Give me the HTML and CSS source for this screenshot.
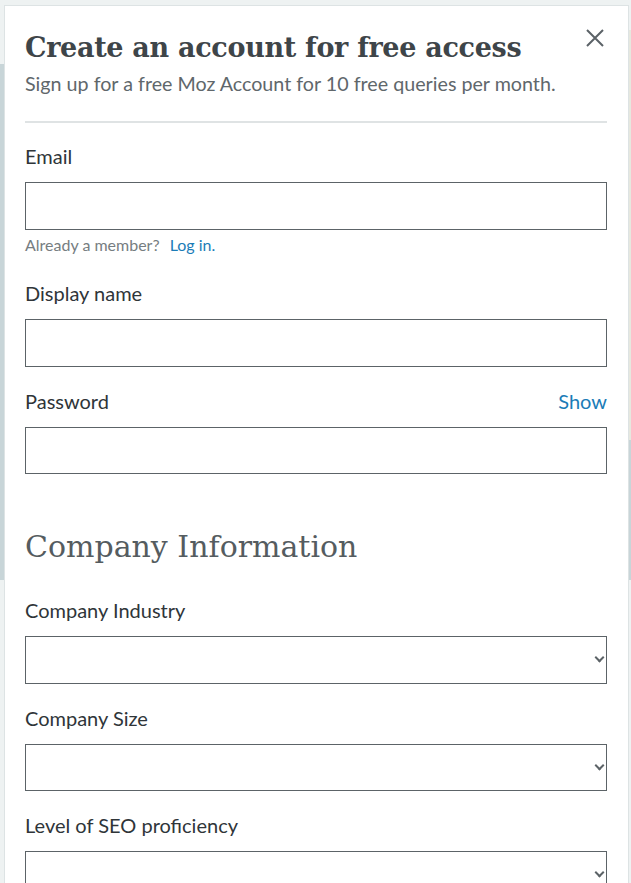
FILE: index.html
```html
<!DOCTYPE html>
<html lang="en">
<head>
<meta charset="utf-8">
<title>Create an account</title>
<link rel="stylesheet" href="styles.css">
</head>
<body>
<div class="page">
  <div class="modal">
    <div class="head">
      <h1 class="title">Create an account for free access</h1>
      <button class="close" aria-label="Close">
        <svg width="20" height="20" viewBox="0 0 20 20"><path d="M2 2 L18 18 M18 2 L2 18" stroke="#5b6267" stroke-width="2" fill="none"/></svg>
      </button>
    </div>
    <p class="subtitle">Sign up for a free Moz Account for 10 free queries per month.</p>
    <hr class="divider">
    <form class="form">
      <div class="field">
        <label class="label">Email</label>
        <input class="input" type="text">
        <div class="help">Already a member? <a class="link small" href="#">Log in.</a></div>
      </div>
      <div class="field">
        <label class="label">Display name</label>
        <input class="input" type="text">
      </div>
      <div class="field">
        <div class="label-row">
          <label class="label">Password</label>
          <a class="link" href="#">Show</a>
        </div>
        <input class="input" type="password">
      </div>
      <h2 class="section">Company Information</h2>
      <div class="field">
        <label class="label">Company Industry</label>
        <div class="select"><span class="chev"></span></div>
      </div>
      <div class="field">
        <label class="label">Company Size</label>
        <div class="select"><span class="chev"></span></div>
      </div>
      <div class="field">
        <label class="label">Level of SEO proficiency</label>
        <div class="select"><span class="chev"></span></div>
      </div>
    </form>
  </div>
</div>
</body>
</html>
```
FILE: styles.css
```css
* { box-sizing: border-box; }
html, body { margin: 0; padding: 0; }
body {
  width: 631px;
  height: 883px;
  overflow: hidden;
  background: #eef2f2;
  font-family: "Lato", "Noto Sans", sans-serif;
}
.page {
  height: 883px;
  padding: 5px 2px 0 4px;
  background:
    linear-gradient(to bottom, transparent 0, transparent 64px, #c8d5d8 64px, #c8d5d8 580px, transparent 580px) left top / 4px 100% no-repeat,
    linear-gradient(to bottom, transparent 0, transparent 30px, #e6e8df 30px, #e6e8df 440px, #c8d5d8 440px, #c8d5d8 580px, transparent 580px) right top / 2px 100% no-repeat,
    #eef2f2;
}
.modal {
  background: #fff;
  border: 1px solid #dde3e4;
  border-bottom: none;
  height: 900px;
  padding: 22px 21px 0 20px;
}
.head {
  display: flex;
  justify-content: space-between;
  align-items: flex-start;
}
.title {
  margin: 0;
  font-family: "DejaVu Serif", serif;
  font-weight: bold;
  font-size: 27px;
  line-height: 40px;
  color: #3e4549;
  letter-spacing: -0.3px;
}
.close {
  border: 0;
  background: none;
  padding: 0;
  margin: 0 2px 0 0;
  width: 20px;
  height: 20px;
  cursor: pointer;
}
.close svg { display: block; }
.subtitle {
  margin: 2px 0 0;
  font-size: 19.7px;
  line-height: 28px;
  color: #60676b;
}
.divider {
  border: 0;
  border-top: 2px solid #dfe3e4;
  margin: 23px 0 18px;
}
.form { display: flex; flex-direction: column; }
.field { margin-bottom: 19px; }
.label {
  display: block;
  font-size: 20px;
  line-height: 30px;
  color: #2f3539;
  margin-bottom: 11px;
}
.label-row {
  display: flex;
  justify-content: space-between;
  align-items: baseline;
}
.label-row .label { margin-bottom: 11px; }
.link {
  color: #1b7cb7;
  text-decoration: none;
  font-size: 20px;
  line-height: 30px;
}
.link.small { font-size: 16px; line-height: 20px; margin-left: 6px; }
.input, .select {
  display: block;
  width: 100%;
  height: 47.5px;
  border: 1px solid #5c6367;
  border-radius: 0;
  background: #fff;
  margin: 0;
  font: inherit;
}
.select { position: relative; }
.chev {
  position: absolute;
  right: 3px;
  top: 17px;
  width: 7px;
  height: 7px;
  border-right: 2px solid #5c6367;
  border-bottom: 2px solid #5c6367;
  transform: rotate(45deg);
}
.help {
  font-size: 16px;
  line-height: 20px;
  color: #767d81;
  margin-top: 5px;
  margin-bottom: 4.5px;
}
.section {
  margin: 34px 0 28px;
  font-family: "DejaVu Serif", serif;
  font-weight: normal;
  font-size: 30px;
  line-height: 40px;
  color: #555c60;
  letter-spacing: 0;
}
```
